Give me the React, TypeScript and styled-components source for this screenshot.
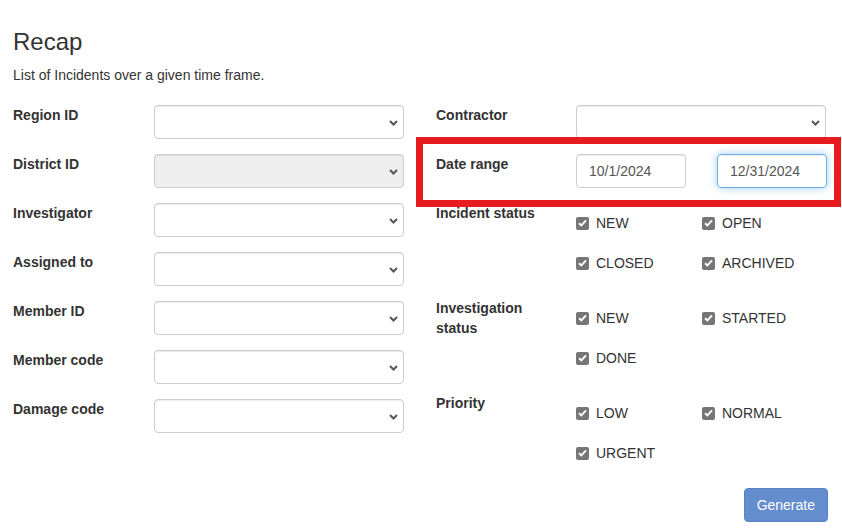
import React from "react";
import styled, { createGlobalStyle } from "styled-components";

const GlobalStyle = createGlobalStyle`
  html, body {
    margin: 0;
    padding: 0;
    background: #fff;
  }
  body {
    font-family: "Liberation Sans", Arial, Helvetica, sans-serif;
    font-size: 14px;
    line-height: 20px;
    color: #333;
  }
  * {
    box-sizing: border-box;
  }
`;

const Page = styled.div`
  padding: 29px 0 0 13px;
  width: 842px;
`;

const Title = styled.h3`
  margin: 0 0 10px;
  font-size: 24px;
  font-weight: 500;
  line-height: 26.4px;
  color: #333;
`;

const Lead = styled.p`
  margin: 0 0 20px;
`;

const Columns = styled.div`
  display: grid;
  grid-template-columns: 391px 391px;
  column-gap: 32px;
  align-items: start;
`;

const Column = styled.div`
  display: flex;
  flex-direction: column;
`;

const Row = styled.div`
  position: relative;
  display: flex;
  align-items: flex-start;
  margin-bottom: 15px;
`;

const Label = styled.label<{ $width?: number }>`
  flex: 0 0 ${(p) => p.$width ?? 141}px;
  padding-right: 20px;
  font-weight: 700;
  line-height: 20px;
  color: #333;
`;

const SelectBox = styled.div<{ $disabled?: boolean }>`
  position: relative;
  width: 250px;
  height: 34px;
  border: 1px solid #ccc;
  border-radius: 4px;
  background: ${(p) => (p.$disabled ? "#eee" : "#fff")};
  box-shadow: inset 0 1px 1px rgba(0, 0, 0, 0.075);
  svg {
    position: absolute;
    right: 5px;
    top: 14px;
  }
`;

const DateInputs = styled.div`
  display: flex;
  gap: 31px;
`;

const DateInput = styled.div<{ $focus?: boolean }>`
  width: 110px;
  height: 34px;
  padding: 6px 12px;
  border: 1px solid ${(p) => (p.$focus ? "#66afe9" : "#ccc")};
  border-radius: 4px;
  color: #555;
  line-height: 20px;
  box-shadow: ${(p) =>
    p.$focus
      ? "inset 0 1px 1px rgba(0,0,0,.075), 0 0 8px rgba(102,175,233,.6)"
      : "inset 0 1px 1px rgba(0,0,0,.075)"};
`;

const Highlight = styled.div`
  position: absolute;
  left: -20px;
  top: -17px;
  right: -14px;
  bottom: -19px;
  border: 7px solid #e81c1f;
  pointer-events: none;
`;

const CheckGrid = styled.div`
  display: grid;
  grid-template-columns: 126px 126px;
`;

const CheckItem = styled.label`
  display: flex;
  align-items: center;
  height: 40px;
  gap: 7px;
  color: #333;
  font-weight: 400;
`;

const Box = styled.span`
  display: inline-flex;
  align-items: center;
  justify-content: center;
  width: 13px;
  height: 13px;
  border-radius: 2px;
  background: #767676;
`;

const Footer = styled.div`
  display: flex;
  justify-content: flex-end;
  width: 815px;
`;

const Button = styled.button`
  height: 34px;
  padding: 6px 12px;
  border: 1px solid #5a83c4;
  border-radius: 4px;
  background: #648dcd;
  color: #fff;
  font-family: inherit;
  font-size: 14px;
  line-height: 20px;
  cursor: not-allowed;
`;

const Chevron = () => (
  <svg width="9" height="6" viewBox="0 0 9 6">
    <path d="M1 1 L4.5 4.5 L8 1" fill="none" stroke="#555" strokeWidth="2" />
  </svg>
);

const Check = ({ label }: { label: string }) => (
  <CheckItem>
    <Box>
      <svg width="9" height="8" viewBox="0 0 9 8">
        <path d="M1 4.2 L3.4 6.4 L8 1.4" fill="none" stroke="#fff" strokeWidth="2" />
      </svg>
    </Box>
    {label}
  </CheckItem>
);

const leftFields = [
  { label: "Region ID" },
  { label: "District ID", disabled: true },
  { label: "Investigator" },
  { label: "Assigned to" },
  { label: "Member ID" },
  { label: "Member code" },
  { label: "Damage code" },
];

const checkGroups = [
  { label: "Incident status", items: ["NEW", "OPEN", "CLOSED", "ARCHIVED"] },
  { label: "Investigation status", items: ["NEW", "STARTED", "DONE"] },
  { label: "Priority", items: ["LOW", "NORMAL", "URGENT"] },
];

export default function App() {
  return (
    <>
      <GlobalStyle />
      <Page>
        <Title>Recap</Title>
        <Lead>List of Incidents over a given time frame.</Lead>
        <Columns>
          <Column>
            {leftFields.map((f) => (
              <Row key={f.label}>
                <Label>{f.label}</Label>
                <SelectBox $disabled={f.disabled}>
                  <Chevron />
                </SelectBox>
              </Row>
            ))}
          </Column>
          <Column>
            <Row>
              <Label $width={140}>Contractor</Label>
              <SelectBox>
                <Chevron />
              </SelectBox>
            </Row>
            <Row>
              <Label $width={140}>Date range</Label>
              <DateInputs>
                <DateInput>10/1/2024</DateInput>
                <DateInput $focus>12/31/2024</DateInput>
              </DateInputs>
              <Highlight />
            </Row>
            {checkGroups.map((g) => (
              <Row key={g.label}>
                <Label $width={140}>{g.label}</Label>
                <CheckGrid>
                  {g.items.map((it) => (
                    <Check key={it} label={it} />
                  ))}
                </CheckGrid>
              </Row>
            ))}
          </Column>
        </Columns>
        <Footer>
          <Button>Generate</Button>
        </Footer>
      </Page>
    </>
  );
}
